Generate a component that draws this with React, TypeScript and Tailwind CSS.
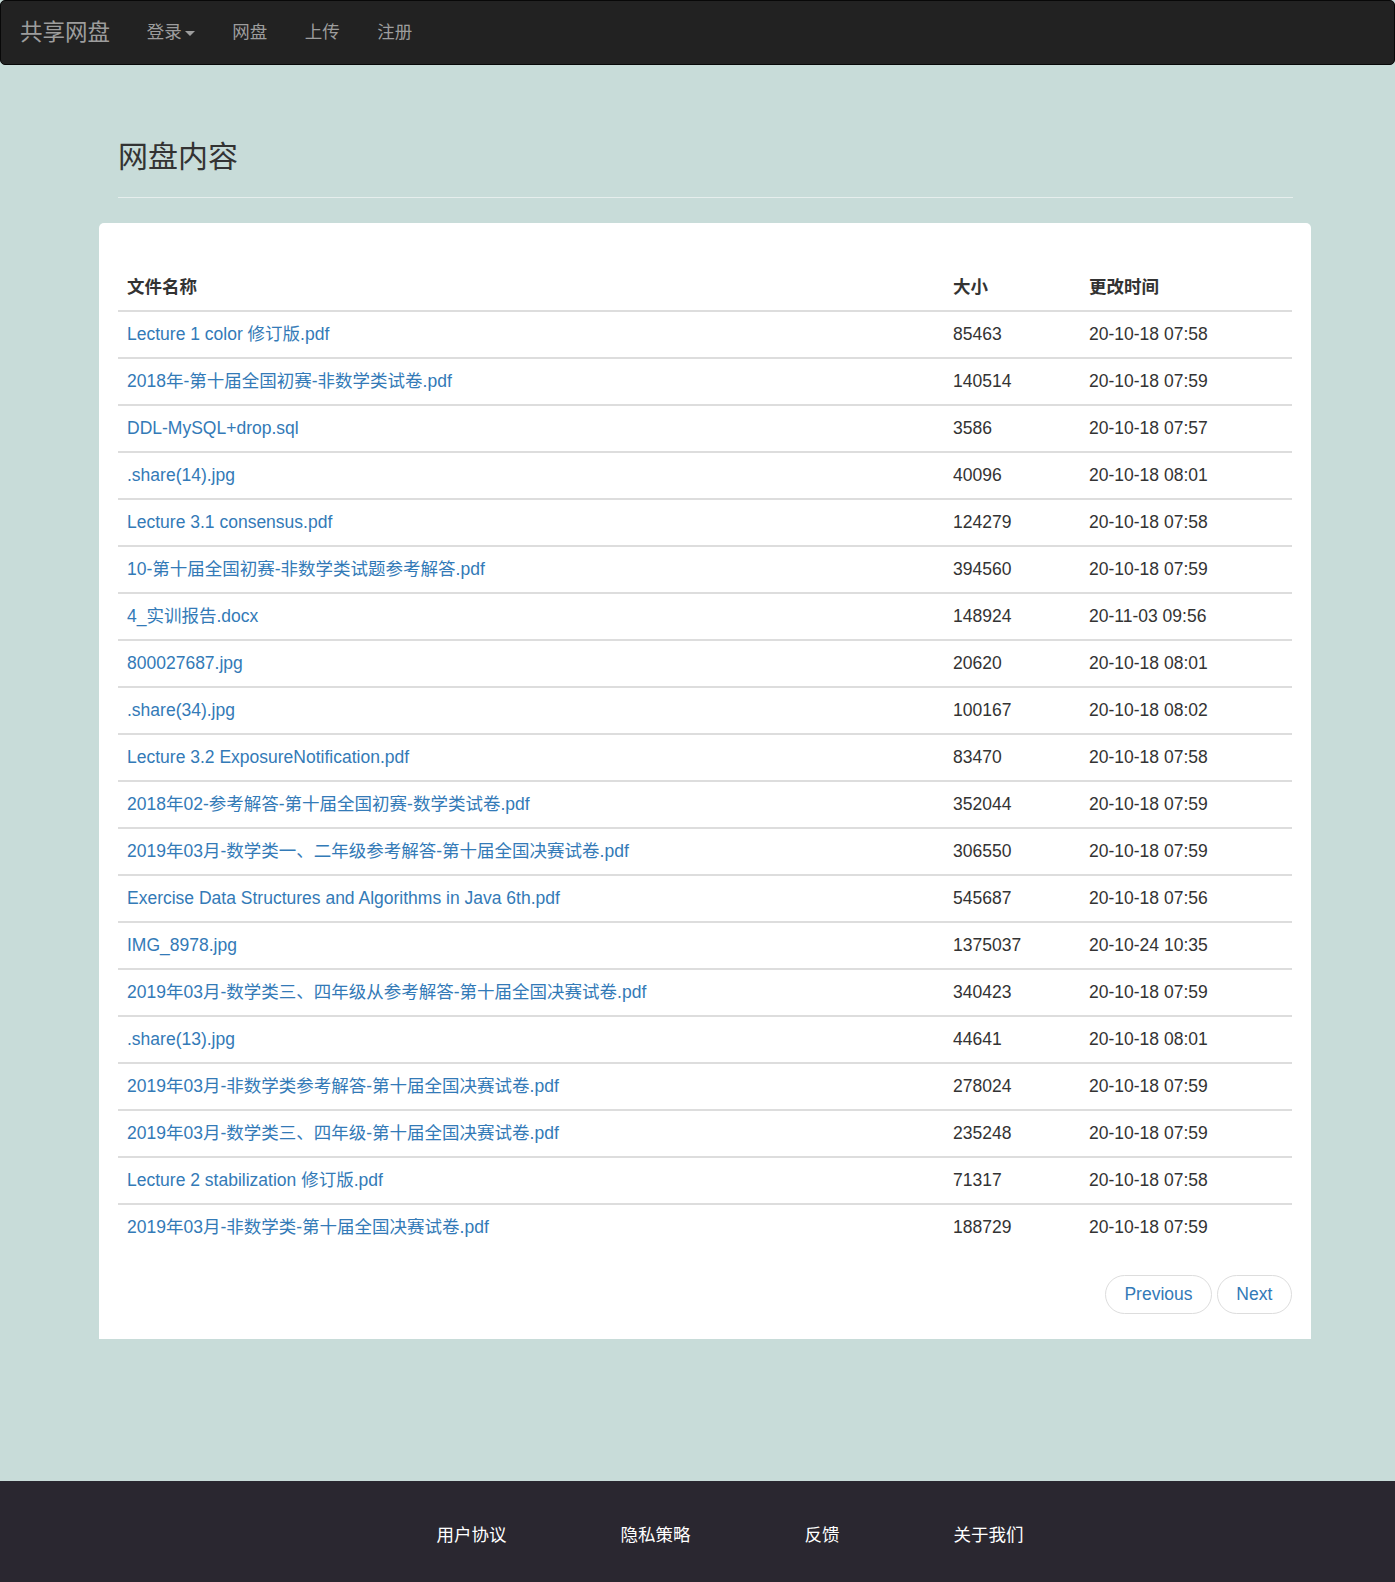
import React from "react";

const rows: [string, string, string][] = [
  ["Lecture 1 color 修订版.pdf", "85463", "20-10-18 07:58"],
  ["2018年-第十届全国初赛-非数学类试卷.pdf", "140514", "20-10-18 07:59"],
  ["DDL-MySQL+drop.sql", "3586", "20-10-18 07:57"],
  [".share(14).jpg", "40096", "20-10-18 08:01"],
  ["Lecture 3.1 consensus.pdf", "124279", "20-10-18 07:58"],
  ["10-第十届全国初赛-非数学类试题参考解答.pdf", "394560", "20-10-18 07:59"],
  ["4_实训报告.docx", "148924", "20-11-03 09:56"],
  ["800027687.jpg", "20620", "20-10-18 08:01"],
  [".share(34).jpg", "100167", "20-10-18 08:02"],
  ["Lecture 3.2 ExposureNotification.pdf", "83470", "20-10-18 07:58"],
  ["2018年02-参考解答-第十届全国初赛-数学类试卷.pdf", "352044", "20-10-18 07:59"],
  ["2019年03月-数学类一、二年级参考解答-第十届全国决赛试卷.pdf", "306550", "20-10-18 07:59"],
  ["Exercise Data Structures and Algorithms in Java 6th.pdf", "545687", "20-10-18 07:56"],
  ["IMG_8978.jpg", "1375037", "20-10-24 10:35"],
  ["2019年03月-数学类三、四年级从参考解答-第十届全国决赛试卷.pdf", "340423", "20-10-18 07:59"],
  [".share(13).jpg", "44641", "20-10-18 08:01"],
  ["2019年03月-非数学类参考解答-第十届全国决赛试卷.pdf", "278024", "20-10-18 07:59"],
  ["2019年03月-数学类三、四年级-第十届全国决赛试卷.pdf", "235248", "20-10-18 07:59"],
  ["Lecture 2 stabilization 修订版.pdf", "71317", "20-10-18 07:58"],
  ["2019年03月-非数学类-第十届全国决赛试卷.pdf", "188729", "20-10-18 07:59"],
];

export default function App() {
  return (
    <div
      className="min-h-[1582px] flex flex-col bg-[#c8dcd9] text-[#333] text-[17.5px] leading-[25px]"
      style={{ fontFamily: '"Liberation Sans", Arial, "Noto Sans CJK SC", sans-serif' }}
    >
      {/* Navbar */}
      <nav className="h-[65px] bg-[#222] border border-[#080808] rounded-[5px] flex items-center">
        <a className="pl-[19px] pr-[18px] text-[22.5px] leading-[25px] text-[#9d9d9d] -mt-[1px]">共享网盘</a>
        <ul className="flex items-center text-[#9d9d9d] -mt-[1px]">
          <li className="px-[18.75px] flex items-center">
            登录
            <span className="ml-[3px] mt-[2px] w-0 h-0 border-t-[5px] border-t-[#9d9d9d] border-l-[5px] border-l-transparent border-r-[5px] border-r-transparent" />
          </li>
          <li className="px-[18.75px]">网盘</li>
          <li className="px-[18.75px]">上传</li>
          <li className="px-[18.75px]">注册</li>
        </ul>
      </nav>

      <main className="flex-1">
        <div className="ml-[118px] w-[1175px] pt-[75px] pb-[24px] border-b border-[#e6eeed]">
          <h2 className="text-[30px] leading-[33px] text-[#333]">网盘内容</h2>
        </div>
        <div className="ml-[99px] w-[1212px] mt-[25px] bg-white rounded-t-[5px] px-[19px] pt-[42px] pb-[25px]">
          <table className="w-full border-collapse table-fixed">
            <colgroup>
              <col className="w-[825px]" />
              <col className="w-[136px]" />
              <col />
            </colgroup>
            <thead>
              <tr className="text-left font-bold">
                <th className="pl-[9px] py-[10px] font-bold">文件名称</th>
                <th className="pl-[10px] py-[10px] font-bold">大小</th>
                <th className="pl-[10px] py-[10px] font-bold">更改时间</th>
              </tr>
            </thead>
            <tbody>
              {rows.map((r, i) => (
                <tr key={i} className="border-t-2 border-[#ddd]">
                  <td className="pl-[9px] py-[10px] text-[#337ab7] whitespace-nowrap">{r[0]}</td>
                  <td className="pl-[10px] py-[10px]">{r[1]}</td>
                  <td className="pl-[10px] py-[10px]">{r[2]}</td>
                </tr>
              ))}
            </tbody>
          </table>
          <div className="mt-[25px] flex justify-end gap-[5px]">
            <a className="h-[39px] px-[18px] flex items-center border border-[#ddd] rounded-full text-[#337ab7]">Previous</a>
            <a className="h-[39px] px-[18.75px] flex items-center border border-[#ddd] rounded-full text-[#337ab7]">Next</a>
          </div>
        </div>
      </main>

      <footer className="h-[101px] pt-[7px] bg-[#2a2730] flex items-center justify-center pl-[65px] gap-[114px] text-white">
        <span>用户协议</span>
        <span>隐私策略</span>
        <span>反馈</span>
        <span>关于我们</span>
      </footer>
    </div>
  );
}
